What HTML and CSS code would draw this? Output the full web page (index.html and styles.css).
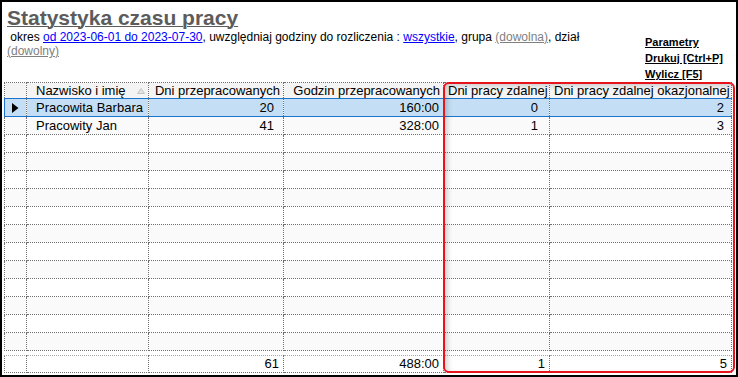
FILE: index.html
```html
<!DOCTYPE html>
<html>
<head>
    <title>Statystyka czasu pracy</title>
    <link rel="stylesheet" href="styles.css">
</head>
<body>
    <div class="window">
        <div class="top">
            <div class="info">
                <h1 class="title">Statystyka czasu pracy</h1>
                <p class="filters">&nbsp;okres <a href="#" class="link">od 2023-06-01 do 2023-07-30</a>, uwzględniaj godziny do rozliczenia : <a href="#" class="link">wszystkie</a>, grupa <a href="#" class="link-any">(dowolna)</a>, dział <a href="#" class="link-any">(dowolny)</a></p>
            </div>
            <div class="actions">
                <a href="#">Parametry</a>
                <a href="#">Drukuj [Ctrl+P]</a>
                <a href="#">Wylicz [F5]</a>
            </div>
        </div>

        <div class="grid-wrap">
            <table class="grid">
                <colgroup>
                    <col class="c-ind"><col class="c-name"><col class="c-days"><col class="c-hours"><col class="c-remote"><col class="c-occ">
                </colgroup>
                <thead>
                    <tr>
                        <th></th>
                        <th class="left">Nazwisko i imię<span class="sort"><svg width="8" height="6" viewBox="0 0 8 6"><polygon points="4,0.5 7.5,5.5 0.5,5.5" fill="#e4e4e4" stroke="#c4c4c4" stroke-width="1"/></svg></span></th>
                        <th>Dni przepracowanych</th>
                        <th>Godzin przepracowanych</th>
                        <th>Dni pracy zdalnej</th>
                        <th>Dni pracy zdalnej okazjonalnej</th>
                    </tr>
                </thead>
                <tbody id="rows"></tbody>
            </table>

            <table class="grid totals">
                <colgroup>
                    <col class="c-ind"><col class="c-name"><col class="c-days"><col class="c-hours"><col class="c-remote"><col class="c-occ">
                </colgroup>
                <tr>
                    <td></td>
                    <td></td>
                    <td class="num">61</td>
                    <td class="num">488:00</td>
                    <td class="num">1</td>
                    <td class="num">5</td>
                </tr>
            </table>

            <div class="highlight"></div>
        </div>
    </div>

    <script>
        var data = [
            { name: 'Pracowita Barbara', days: 20, hours: '160:00', remote: 0, occ: 2 },
            { name: 'Pracowity Jan', days: 41, hours: '328:00', remote: 1, occ: 3 }
        ];
        var emptyRows = 12;

        var html = '';
        data.forEach(function(r, i) {
            html += '<tr' + (i === 0 ? ' class="selected"' : '') + '>' +
                '<td class="ind">' + (i === 0 ? '<svg width="7" height="10" viewBox="0 0 7 10"><polygon points="0,0 6.5,5 0,10" fill="#000"/></svg>' : '') + '</td>' +
                '<td class="left">' + r.name + '</td>' +
                '<td class="num days">' + r.days + '</td>' +
                '<td class="num">' + r.hours + '</td>' +
                '<td class="num remote">' + r.remote + '</td>' +
                '<td class="num occ">' + r.occ + '</td></tr>';
        });
        for (var i = 0; i < emptyRows; i++) {
            html += '<tr><td></td><td></td><td></td><td></td><td></td><td></td></tr>';
        }
        document.getElementById('rows').innerHTML = html;
    </script>
</body>
</html>
```

FILE: styles.css
```css
html, body { margin: 0; padding: 0; background: #fff; }
body { font-family: "Liberation Sans", Arial, sans-serif; font-size: 12px; color: #000; }

.window {
    box-sizing: border-box;
    width: 738px;
    height: 377px;
    border: 2px solid #000;
    overflow: hidden;
}

.top { height: 80px; display: flex; }
.info { width: 615px; padding-left: 5px; }
.title {
    margin: 4px 0 0;
    font-size: 21px;
    line-height: 24px;
    font-weight: bold;
    color: #5c5c5c;
    text-decoration: underline;
    text-decoration-thickness: 1px;
}
.filters { margin: 0; line-height: 14px; }
.link { color: #0000ff; }
.link-any { color: #808080; }

.actions {
    display: flex;
    flex-direction: column;
    margin: 32px 0 0 23px;
    font-size: 11px;
    line-height: 16px;
    font-weight: bold;
}
.actions a { color: #000; }

.grid-wrap { position: relative; }
.grid {
    margin-left: 2px;
    width: 727px;
    table-layout: fixed;
    border-collapse: collapse;
}
.c-ind { width: 22px; }
.c-name { width: 122px; }
.c-days { width: 135px; }
.c-hours { width: 160px; }
.c-remote { width: 106px; }
.c-occ { width: 182px; }

.grid th, .grid td {
    border: 1px dotted #707070;
    padding: 0 4px 0 4px;
    white-space: nowrap;
    overflow: hidden;
    font-size: 13px;
    text-align: right;
}
.grid th {
    height: 15px;
    line-height: 15px;
    font-weight: normal;
    background: #f4f4f4;
    padding-right: 3px;
}
.grid td { height: 17px; line-height: 16px; }
.grid .left { text-align: left; padding-left: 9px; }
.grid .days { padding-right: 9px; }
.grid .remote { padding-right: 11px; }
.grid .occ { padding-right: 7px; }

.sort { float: right; margin-right: 0; }
.sort svg { display: block; margin-top: 5px; }

.grid tbody tr:nth-child(even) td { background: #fafafa; }
.grid tr.selected td {
    background: #c4dff5;
    border-top: 1px solid #1a74cc;
    border-bottom: 1px solid #1a74cc;
}
.grid tr.selected td.ind { border-left: 1px solid #1a74cc; }
.ind { padding: 0 0 0 7px !important; text-align: left !important; }
.ind svg { display: block; }

.totals { margin-top: 4px; }
.totals td { height: 16px; }
.totals tr td { border-top-color: #a8a8a8; }

.highlight {
    position: absolute;
    left: 441px;
    top: 0;
    width: 292px;
    height: 291px;
    box-sizing: border-box;
    border: 2px solid #e8141c;
    border-radius: 6px;
    box-shadow: inset 3px 2px 5px rgba(0, 0, 0, 0.16);
    pointer-events: none;
}
```
